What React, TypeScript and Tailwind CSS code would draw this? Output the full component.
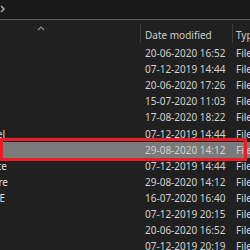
import React from "react";

type Row = { date: string; name?: string; nameW?: string; hl?: boolean };

const rows: Row[] = [
  { date: "20-06-2020 16:52" },
  { date: "07-12-2019 14:44" },
  { date: "20-06-2020 17:26" },
  { date: "15-07-2020 11:03" },
  { date: "17-08-2020 18:22" },
  { date: "07-12-2019 14:44", name: "Control Panel", nameW: "w-[5px]" },
  { date: "29-08-2020 14:12", hl: true },
  { date: "07-12-2019 14:44", name: "Favorite", nameW: "w-[7px]" },
  { date: "29-08-2020 14:12", name: "Software", nameW: "w-[8px]" },
  { date: "16-07-2020 16:40", name: "LOGE", nameW: "w-[5px]" },
  { date: "07-12-2019 20:15" },
  { date: "20-06-2020 16:52" },
  { date: "07-12-2019 20:19" },
];

export default function App() {
  return (
    <div
      className="w-[250px] h-[250px] overflow-hidden bg-[#202020] text-[10px] leading-none"
      style={{ fontFamily: '"Segoe UI", "Noto Sans", "Open Sans", sans-serif' }}
    >
      {/* top bar */}
      <div className="h-[19px] bg-[#191919] flex items-center">
        <svg width="6" height="8" viewBox="0 0 6 8" className="-mt-[2px] shrink-0">
          <path d="M1 1 L4 4 L1 7" stroke="#a8a8a8" strokeWidth="1.5" fill="none" />
        </svg>
      </div>
      <div className="h-px bg-[#5e5e5e]" />
      {/* header */}
      <div className="h-[25px] flex bg-[#202020] whitespace-nowrap">
        <div className="w-[140px] shrink-0 flex pt-[6px] pl-[37px]">
          <svg width="8" height="5" viewBox="0 0 8 5">
            <path d="M1 4 L4 1 L7 4" stroke="#8f8f8f" strokeWidth="1.2" fill="none" />
          </svg>
        </div>
        <div className="w-px shrink-0 bg-[#3d3d3d] mt-[4px] mb-[2px]" />
        <div className="w-[91px] shrink-0 flex items-center pt-[5px] pl-[4px] text-[#cccccc]">
          Date modified
        </div>
        <div className="w-px shrink-0 bg-[#3d3d3d] mt-[4px] mb-[2px]" />
        <div className="shrink-0 flex items-center pt-[5px] pl-[3px] text-[#cccccc]">
          Type
        </div>
      </div>
      {/* rows */}
      <div className="flex flex-col">
        {rows.map((r, i) => (
          <div
            key={i}
            className={
              "relative h-[16.1px] flex items-center whitespace-nowrap " +
              (r.hl ? "bg-[#7a7a7a]" : "")
            }
          >
            <div className="w-[141px] shrink-0 h-full flex items-center">
              {r.name ? (
                <div className={"overflow-hidden flex justify-end " + r.nameW}>
                  <span className="shrink-0 text-[#dedede]">{r.name}</span>
                </div>
              ) : null}
            </div>
            <div className="w-[92px] shrink-0 pl-[4px] text-[#d2d2d2]">{r.date}</div>
            <div className="shrink-0 pl-[3px] text-[#d2d2d2]">File folder</div>
            {r.hl ? (
              <div className="absolute left-0 w-[247px] -top-[3.5px] -bottom-[3px] border-[3px] border-[#ec1c24]" />
            ) : null}
          </div>
        ))}
      </div>
    </div>
  );
}
